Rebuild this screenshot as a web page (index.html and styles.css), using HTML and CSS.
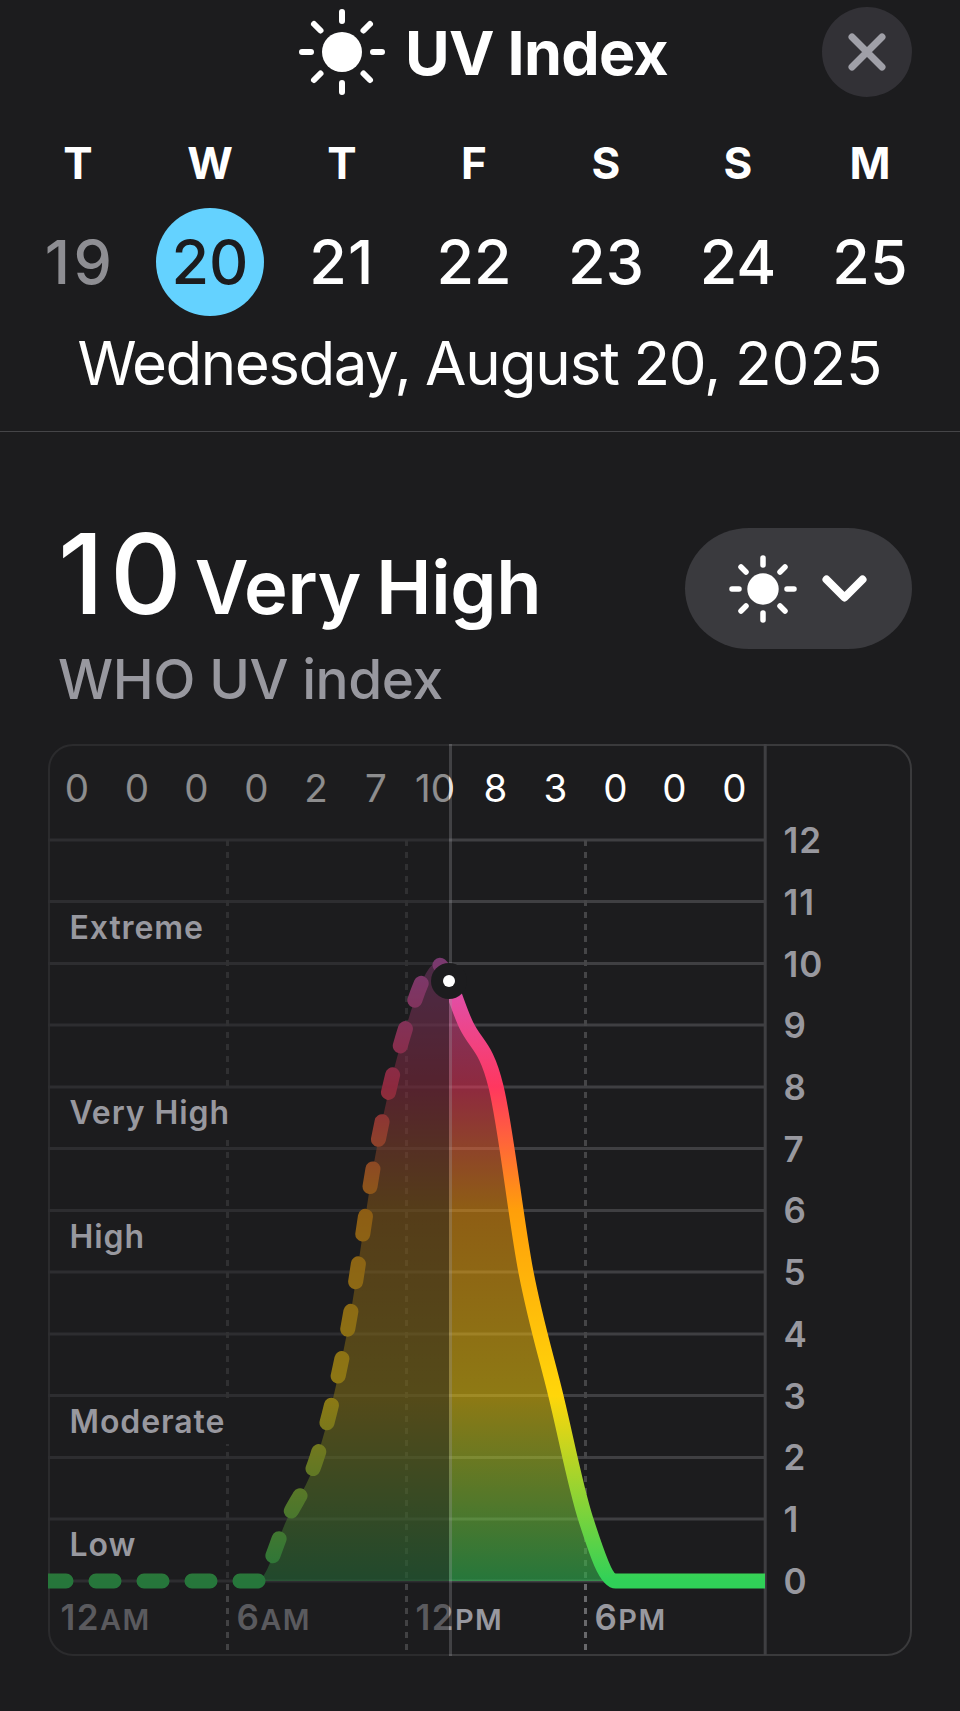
FILE: index.html
```html
<!DOCTYPE html>
<html lang="en">

<head>
    <meta charset="UTF-8">
    <meta name="viewport" content="width=device-width, initial-scale=1.0">
    <title>UV Index</title>
    <link rel="stylesheet" href="styles.css">
</head>

<body>
    <div class="header">
        <div class="title">
            <svg class="title_sun" viewBox="-43 -43 86 86">
                <circle r="20" />
                <path d="M0-40v9M0 31v9M-40 0h9M31 0h9M-28-28l6.5 6.5M28-28l-6.5 6.5M-28 28l6.5-6.5M28 28l-6.5-6.5" />
            </svg>
            <h1>UV Index</h1>
        </div>
        <button class="close" aria-label="Close">
            <svg width="90" height="90" viewBox="0 0 90 90">
                <path d="M30 30L60 60M60 30L30 60" />
            </svg>
        </button>
    </div>

    <div class="week">
        <div class="day past"><span>T</span><b class="wide">19</b></div>
        <div class="day selected"><span>W</span><b>20</b></div>
        <div class="day"><span>T</span><b class="narrow">21</b></div>
        <div class="day"><span>F</span><b>22</b></div>
        <div class="day"><span>S</span><b>23</b></div>
        <div class="day"><span>S</span><b>24</b></div>
        <div class="day"><span>M</span><b>25</b></div>
    </div>
    <div class="date"><span class="weekday">Wednesday,</span> August 20, <span class="year">2025</span></div>

    <div class="summary">
        <div>
            <div class="reading"><span class="value">10</span><span class="level">Very High</span></div>
            <div class="source">WHO UV index</div>
        </div>
        <button class="picker" aria-label="Condition">
            <svg class="picker_sun" viewBox="-34 -34 68 68">
                <circle r="15.7" />
                <path d="M0-31v7M0 24v7M-31 0h7M24 0h7M-22-22l5 5M22-22l-5 5M-22 22l5-5M22 22l-5-5" />
            </svg>
            <svg class="chevron" viewBox="0 0 46 28">
                <path d="M4.5 4.500L22.500 22.500L40.500 4.500" />
            </svg>
        </button>
    </div>

    <svg class="chart" width="864" height="912" viewBox="0 0 864 912">
        <defs>
            <linearGradient id="uv" gradientUnits="userSpaceOnUse" x1="0" y1="837" x2="0" y2="157.75">
                <stop offset="0" stop-color="#30d158" />
                <stop offset="0.2727" stop-color="#ffd60a" />
                <stop offset="0.5454" stop-color="#ff9f0a" />
                <stop offset="0.7273" stop-color="#ff375f" />
                <stop offset="1" stop-color="#c466ee" />
            </linearGradient>
            <clipPath id="before"><rect width="401" height="912" /></clipPath>
            <clipPath id="after"><rect x="401" width="316" height="912" /></clipPath>
            <path id="curve" d="M0 837H209.1C219.1 837 229 795.8 239 775.25C249 754.7 258.9 744.4 268.9 713.5C278.9 682.6 288.8 641.5 298.8 590C308.8 538.5 318.6 456.2 328.6 404.75C338.6 353.3 348.5 312.1 358.5 281.25C368.5 250.4 378.4 219.5 388.4 219.5C398.4 219.5 408.3 260.7 418.3 281.25C428.3 301.8 438.1 301.8 448.1 343C458.1 384.2 468 476.8 478 528.25C488 579.7 497.9 610.6 507.9 651.75C517.9 692.9 527.8 744.4 537.8 775.25C547.8 806.1 557.6 837 567.6 837H717" />
        </defs>

        <!-- frame and grid -->
        <rect class="frame" x="1" y="1" width="862" height="910" rx="24" />
        <path class="grid" d="M0 96H717M0 157.500H717M0 219.500H717M0 281H717M0 343H717M0 404.500H717M0 466.500H717M0 528H717M0 590H717M0 651.500H717M0 713.500H717M0 775H717M0 837H717" />
        <path class="axis" d="M717.200 0V911" />
        <path class="hours" d="M179.500 96V837M358.500 96V837M537.500 96V837" />
        <path class="hours low" d="M179.500 840V909M358.500 840V909M537.500 840V909" />

        <!-- gaps in the hour line behind the long labels -->
        <rect class="gap" x="168" y="346" width="22" height="45" />
        <rect class="gap" x="168" y="654" width="22" height="46" />

        <use class="area" href="#curve" />
        <use class="line dashed" href="#curve" clip-path="url(#before)" />
        <use class="line" href="#curve" clip-path="url(#after)" />

        <g class="values">
            <text x="29" y="58">0</text>
            <text x="89" y="58">0</text>
            <text x="148.500" y="58">0</text>
            <text x="208.500" y="58">0</text>
            <text x="268" y="58">2</text>
            <text x="328" y="58">7</text>
            <text x="387" y="58">10</text>
            <text x="447.500" y="58">8</text>
            <text x="507.500" y="58">3</text>
            <text x="567.500" y="58">0</text>
            <text x="626.500" y="58">0</text>
            <text x="686.500" y="58">0</text>
        </g>

        <g class="times">
            <text x="12.500" y="886">12<tspan>AM</tspan></text>
            <text x="188.500" y="886">6<tspan>AM</tspan></text>
            <text x="367.500" y="886">12<tspan>PM</tspan></text>
            <text x="546.500" y="886">6<tspan>PM</tspan></text>
        </g>

        <!-- hours already gone -->
        <rect class="shade" x="-1" y="-1" width="402" height="914" />

        <g class="levels">
            <text x="21.500" y="195">Extreme</text>
            <text x="21.500" y="380">Very High</text>
            <text x="21.500" y="504">High</text>
            <text x="21.500" y="689">Moderate</text>
            <text x="21.500" y="812">Low</text>
        </g>

        <g class="scale">
            <text x="735.500" y="109">12</text>
            <text x="735.500" y="171">11</text>
            <text x="735.500" y="232.500">10</text>
            <text x="735.500" y="294">9</text>
            <text x="735.500" y="356">8</text>
            <text x="735.500" y="418">7</text>
            <text x="735.500" y="479">6</text>
            <text x="735.500" y="541">5</text>
            <text x="735.500" y="603">4</text>
            <text x="735.500" y="665">3</text>
            <text x="735.500" y="726">2</text>
            <text x="735.500" y="788">1</text>
            <text x="735.500" y="850">0</text>
        </g>

        <path class="now" d="M402.500 0V912" />
        <circle class="dot" cx="401" cy="237" r="18" />
        <circle class="dot_inner" cx="401" cy="237" r="6" />
    </svg>
</body>

</html>
```
FILE: styles.css
```css
* {
    box-sizing: border-box;
}

body {
    margin: 0;
    height: 1711px;
    background: #1c1c1e;
    color: #fff;
    font-family: Inter, "Liberation Sans", sans-serif;
    overflow: hidden;
}

button {
    border: 0;
    padding: 0;
}

.header {
    display: grid;
    grid-template-columns: 1fr auto 1fr;
    align-items: center;
    height: 104px;
    padding: 0 48px;
}

.title {
    grid-column: 2;
    display: flex;
    align-items: center;
    gap: 20px;
    margin-left: 7px;
}

.title_sun,
.picker_sun {
    fill: #fff;
    stroke: #fff;
    stroke-width: 6;
    stroke-linecap: round;
}

.title_sun {
    width: 86px;
    height: 86px;
}

.title_sun circle,
.picker_sun circle {
    stroke: none;
}

h1 {
    margin: 0;
    padding-top: 2px;
    font-size: 61px;
    line-height: 102px;
    font-weight: 700;
    letter-spacing: -0.7px;
}

.close {
    justify-self: end;
    width: 90px;
    height: 90px;
    border-radius: 50%;
    background: #323136;
}

.close path {
    stroke: #a0a0a8;
    stroke-width: 7;
    stroke-linecap: round;
}

.week {
    display: grid;
    grid-template-columns: repeat(7, 132px);
    padding: 29px 12px 0;
}

.day {
    display: flex;
    flex-direction: column;
    align-items: center;
    gap: 15px;
}

.day span {
    font-size: 44px;
    line-height: 60px;
    font-weight: 700;
}

.day b {
    width: 108px;
    height: 108px;
    border-radius: 50%;
    font-size: 61px;
    line-height: 108px;
    font-weight: 500;
    text-align: center;
}

.day .narrow {
    letter-spacing: 1.3px;
}

.day .wide {
    padding-left: 4px;
    letter-spacing: 3.5px;
}

.day.past b {
    color: #8e8e93;
}

.day.selected b {
    background: #64d2ff;
    color: #1c1c1e;
}

.date {
    height: 116px;
    border-bottom: 1px solid #454548;
    font-size: 60px;
    line-height: 94px;
    letter-spacing: -1.14px;
    word-spacing: -1px;
    text-align: center;
}

.weekday {
    letter-spacing: -1.5px;
}

.year {
    letter-spacing: 0;
}

.summary {
    display: flex;
    justify-content: space-between;
    padding: 96px 48px 0 58px;
    height: 312px;
}

.reading {
    display: flex;
    align-items: baseline;
    gap: 7px;
    height: 116px;
}

.value {
    font-size: 111px;
    line-height: 92px;
    font-weight: 500;
    letter-spacing: 6px;
}

.level {
    font-size: 74px;
    line-height: 80px;
    font-weight: 600;
    letter-spacing: -0.3px;
    word-spacing: -3px;
}

.source {
    font-size: 55px;
    line-height: 71px;
    font-weight: 500;
    letter-spacing: -0.45px;
    color: #98989f;
}

.picker {
    display: flex;
    align-items: center;
    gap: 25px;
    width: 227px;
    height: 121px;
    padding-left: 44px;
    border-radius: 64px / 60.5px;
    background: #3a3a3e;
}

.picker_sun {
    width: 68px;
    height: 68px;
    stroke-width: 5.5;
}

.chevron {
    width: 46px;
    height: 28px;
    fill: none;
    stroke: #fff;
    stroke-width: 8;
    stroke-linecap: round;
    stroke-linejoin: round;
}

.chart {
    display: block;
    margin-left: 48px;
}

.frame {
    fill: none;
    stroke: #3a3a3c;
    stroke-width: 2;
}

.grid,
.axis {
    stroke: #3f3f42;
    stroke-width: 3;
}

.hours {
    stroke: #454547;
    stroke-width: 3;
    stroke-dasharray: 6 6;
}

.hours.low {
    stroke: #68686b;
}

.gap {
    fill: #1c1c1e;
}

.area {
    fill: url(#uv);
    fill-opacity: 0.5;
}

.line {
    fill: none;
    stroke: url(#uv);
    stroke-width: 15;
}

.dashed {
    stroke-linecap: round;
    stroke-dasharray: 18 30;
}

.shade {
    fill: #1c1c1e;
    fill-opacity: 0.5;
}

.values {
    font-size: 38.5px;
    fill: #fff;
    text-anchor: middle;
}

.times {
    font-size: 35px;
    font-weight: 600;
    letter-spacing: 1.4px;
    fill: #98989f;
}

.times tspan {
    font-size: 29px;
}

.levels {
    font-size: 32px;
    font-weight: 600;
    letter-spacing: 0.9px;
    fill: #98989f;
}

.scale {
    font-size: 35px;
    font-weight: 600;
    letter-spacing: 1px;
    fill: #98989f;
}

.now {
    stroke: #98989f;
    stroke-opacity: 0.3;
    stroke-width: 3;
}

.dot {
    fill: #1c1c1e;
}

.dot_inner {
    fill: #fff;
}
```
